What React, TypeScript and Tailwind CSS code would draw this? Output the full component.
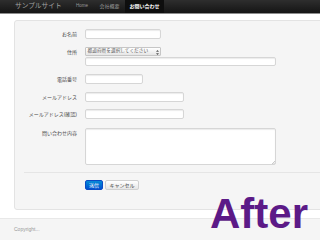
import React from "react";

const inputCls =
  "block bg-white border border-[#d6d6d6] rounded-[2px] shadow-[inset_0_1px_1px_rgba(0,0,0,0.08)] outline-none";

function Row({ label, children, className = "" }: { label: string; children: React.ReactNode; className?: string }) {
  return (
    <div className={"flex items-start " + className}>
      <div className="w-[62px] shrink-0 text-right text-[5px] leading-[10px] text-[#4a4a4a] whitespace-nowrap">{label}</div>
      <div className="ml-[8px] flex flex-col">{children}</div>
    </div>
  );
}

export default function App() {
  return (
    <div className="relative w-[320px] h-[240px] overflow-hidden bg-white font-['Liberation_Sans','Noto_Sans_CJK_JP',sans-serif]">
      {/* navbar */}
      <div className="flex h-[14px] items-stretch bg-gradient-to-b from-[#2e2e2e] to-[#151515] border-b border-[#8c8c8c]">
        <div className="ml-[15px] w-[55px] flex items-center text-[6.7px] leading-none text-[#a0a0a0] whitespace-nowrap">サンプルサイト</div>
        <div className="w-[24px] flex items-center justify-center text-[4.5px] leading-none text-[#9a9a9a]">Home</div>
        <div className="w-[31px] flex items-center justify-center text-[5px] leading-none text-[#9a9a9a] whitespace-nowrap">会社概要</div>
        <div className="w-[39px] flex items-center justify-center bg-[#0e0e0e] text-[5px] leading-none font-bold text-white whitespace-nowrap">お問い合わせ</div>
      </div>

      {/* well */}
      <div className="mt-[6px] ml-[14px] w-[320px] h-[190px] bg-[#f5f5f5] border border-[#e3e3e3] rounded-[3px] pt-[8px]">
        <Row label="お名前">
          <input className={inputCls + " w-[76px] h-[10px]"} />
        </Row>
        <Row label="住所" className="mt-[8px]">
          <div className="relative flex items-center w-[76px] h-[9px] rounded-[1px] border border-[#c6c6c6] bg-gradient-to-b from-white to-[#e6e6e6] pl-[1.5px]">
            <span className="text-[4.7px] leading-none text-[#555] whitespace-nowrap">都道府県を選択してください</span>
            <svg className="absolute right-[1.5px] top-[1.5px]" width="3" height="5" viewBox="0 0 3 5">
              <path d="M1.5 0 L3 1.8 L0 1.8 Z M1.5 5 L3 3.2 L0 3.2 Z" fill="#555" />
            </svg>
          </div>
          <input className={inputCls + " mt-[1px] w-[191px] h-[9px]"} />
        </Row>
        <Row label="電話番号" className="mt-[8px]">
          <input className={inputCls + " w-[58px] h-[10px]"} />
        </Row>
        <Row label="メールアドレス" className="mt-[8px]">
          <input className={inputCls + " w-[99px] h-[10px]"} />
        </Row>
        <Row label="メールアドレス(確認)" className="mt-[7px]">
          <input className={inputCls + " w-[99px] h-[10px]"} />
        </Row>
        <Row label="問い合わせ内容" className="mt-[9px]">
          <div className="relative">
            <textarea className={inputCls + " w-[191px] h-[37px] resize-none"} />
            <svg className="absolute right-[1px] bottom-[1px]" width="3" height="3" viewBox="0 0 3 3">
              <path d="M3 0 L0 3 M3 1.5 L1.5 3" stroke="#999" strokeWidth="0.5" />
            </svg>
          </div>
        </Row>
        <div className="mt-[7px] ml-[9px] border-t border-[#e5e5e5] pt-[7px] pl-[61px] flex gap-[2px]">
          <div className="w-[18px] h-[10px] rounded-[2px] border border-[#0a4bc4] bg-gradient-to-b from-[#0a8ad6] to-[#0450d0] flex items-center justify-center text-[5px] leading-none text-white">送信</div>
          <div className="w-[34px] h-[10px] rounded-[2px] border border-[#d0d0d0] bg-gradient-to-b from-white to-[#e6e6e6] flex items-center justify-center text-[5px] leading-none text-[#444] whitespace-nowrap">キャンセル</div>
        </div>
      </div>

      {/* footer */}
      <div className="mt-[8px] h-[22px] bg-[#f5f5f5] border-t border-[#e8e8e8] flex items-center pl-[14px] text-[5px] leading-none text-[#999]">
        Copyright...
      </div>

      <div className="absolute left-[210px] top-[193px] text-[42px] font-bold leading-none text-[#5c1a87]">After</div>
    </div>
  );
}
